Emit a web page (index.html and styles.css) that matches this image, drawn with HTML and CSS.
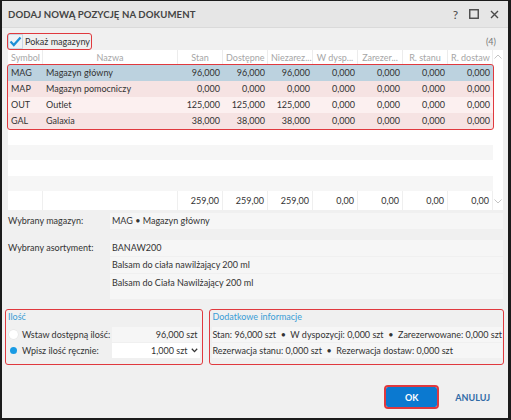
FILE: index.html
```html
<!DOCTYPE html>
<html lang="pl">
<head>
    <meta charset="UTF-8">
    <meta name="viewport" content="width=device-width, initial-scale=1.0">
    <title>Dodaj nową pozycję na dokument</title>
    <link rel="stylesheet" href="styles.css">
</head>
<body>
    <div class="dialog">
        <header class="titlebar">
            <h1>DODAJ NOWĄ POZYCJĘ NA DOKUMENT</h1>
            <div class="win-btns">
                <span class="help">?</span>
                <svg width="10" height="10" viewBox="0 0 10 10"><rect x="0.75" y="0.75" width="8.5" height="8.5" fill="none" stroke="#4a4a4a" stroke-width="1.4"/></svg>
                <svg width="9" height="9" viewBox="0 0 9 9"><path d="M1 1L8 8M8 1L1 8" stroke="#4a4a4a" stroke-width="1.4"/></svg>
            </div>
        </header>

        <main class="content">
            <div class="toolbar">
                <label class="check marked">
                    <span class="box">
                        <svg width="13" height="11" viewBox="0 0 13 11"><path d="M1.5 5.5L4.8 9L11.5 1.5" fill="none" stroke="#1c8fd6" stroke-width="2.2"/></svg>
                    </span>
                    Pokaż magazyny
                </label>
                <span class="count">(4)</span>
            </div>

            <div class="grid">
                <div class="grid-main">
                    <div class="row head">
                        <div>Symbol</div><div>Nazwa</div><div>Stan</div><div>Dostępne</div><div>Niezarez...</div><div>W dysp...</div><div>Zarezer...</div><div>R. stanu</div><div>R. dostaw</div>
                    </div>
                    <div class="rows marked">
                        <div class="row data sel">
                            <div>MAG</div><div>Magazyn główny</div><div class="num">96,000</div><div class="num">96,000</div><div class="num">96,000</div><div class="num">0,000</div><div class="num">0,000</div><div class="num">0,000</div><div class="num">0,000</div>
                        </div>
                        <div class="row data pink">
                            <div>MAP</div><div>Magazyn pomocniczy</div><div class="num">0,000</div><div class="num">0,000</div><div class="num">0,000</div><div class="num">0,000</div><div class="num">0,000</div><div class="num">0,000</div><div class="num">0,000</div>
                        </div>
                        <div class="row data light">
                            <div>OUT</div><div>Outlet</div><div class="num">125,000</div><div class="num">125,000</div><div class="num">125,000</div><div class="num">0,000</div><div class="num">0,000</div><div class="num">0,000</div><div class="num">0,000</div>
                        </div>
                        <div class="row data pink">
                            <div>GAL</div><div>Galaxia</div><div class="num">38,000</div><div class="num">38,000</div><div class="num">38,000</div><div class="num">0,000</div><div class="num">0,000</div><div class="num">0,000</div><div class="num">0,000</div>
                        </div>
                    </div>
                    <div class="empty"></div>
                    <div class="empty alt"></div>
                    <div class="empty"></div>
                    <div class="empty alt"></div>
                    <div class="row foot">
                        <div></div><div></div><div class="num">259,00</div><div class="num">259,00</div><div class="num">259,00</div><div class="num">0,00</div><div class="num">0,00</div><div class="num">0,00</div><div class="num">0,00</div>
                    </div>
                </div>
                <div class="scroll">
                    <svg width="8" height="5" viewBox="0 0 8 5"><path d="M0.5 4.5L4 1L7.5 4.5" fill="none" stroke="#c4c4c4"/></svg>
                    <svg width="8" height="5" viewBox="0 0 8 5"><path d="M0.5 0.5L4 4L7.5 0.5" fill="none" stroke="#c4c4c4"/></svg>
                </div>
            </div>

            <div class="details">
                <div class="field">
                    <span class="label">Wybrany magazyn:</span>
                    <div class="values">
                        <div class="value">MAG • Magazyn główny</div>
                    </div>
                </div>
                <div class="field">
                    <span class="label">Wybrany asortyment:</span>
                    <div class="values">
                        <div class="value">BANAW200</div>
                        <div class="value">Balsam do ciała nawilżający 200 ml</div>
                        <div class="value tall">Balsam do Ciała Nawilżający 200 ml</div>
                    </div>
                </div>
            </div>

            <div class="groups">
                <section class="group qty marked">
                    <h2>Ilość</h2>
                    <div class="qty-row">
                        <span class="radio"></span>
                        <span class="qty-label">Wstaw dostępną ilość:</span>
                        <span class="qty-value">96,000 szt</span>
                    </div>
                    <div class="qty-row">
                        <span class="radio on"></span>
                        <span class="qty-label">Wpisz ilość ręcznie:</span>
                        <span class="qty-value input">1,000 szt
                            <svg width="7" height="5" viewBox="0 0 7 5"><path d="M0.8 0.8L3.5 3.6L6.2 0.8" fill="none" stroke="#333" stroke-width="1.3"/></svg>
                        </span>
                    </div>
                </section>
                <section class="group info marked">
                    <h2>Dodatkowe informacje</h2>
                    <div class="info-row">Stan: 96,000 szt &nbsp;•&nbsp; W dyspozycji: 0,000 szt &nbsp;•&nbsp; Zarezerwowane: 0,000 szt</div>
                    <div class="info-row">Rezerwacja stanu: 0,000 szt &nbsp;•&nbsp; Rezerwacja dostaw: 0,000 szt</div>
                </section>
            </div>

            <div class="actions">
                <button class="btn-ok marked">OK</button>
                <button class="btn-cancel">ANULUJ</button>
            </div>
        </main>
    </div>
</body>
</html>
```

FILE: styles.css
```css
* {
    box-sizing: border-box;
}

body {
    margin: 0;
    font-family: Lato, "Noto Sans", sans-serif;
    font-size: 9px;
    color: #333;
    background-color: #fff;
}

.dialog {
    width: 511px;
    height: 420px;
    border-style: solid;
    border-color: #1b1b1b;
    border-width: 1px 3px 2px 2px;
    background-color: #f0f0f0;
    display: flex;
    flex-direction: column;
}

.titlebar {
    height: 27px;
    background-color: #e6e6e6;
    border-bottom: 1px solid #dadada;
    display: flex;
    align-items: center;
    justify-content: space-between;
    padding: 0 9px 0 6px;
}

h1 {
    margin: 0;
    font-size: 9.6px;
    font-weight: bold;
    color: #444;
    letter-spacing: 0.1px;
}

.win-btns {
    display: flex;
    align-items: center;
    gap: 11px;
    color: #4a4a4a;
}

.help {
    font-size: 12px;
}

.content {
    flex: 1;
    display: flex;
    flex-direction: column;
    padding: 5px 5px 0 6px;
}

.marked {
    outline: 1.5px solid #e0393e;
    border-radius: 2px;
}

/* toolbar */
.toolbar {
    height: 17px;
    display: flex;
    align-items: center;
    justify-content: space-between;
}

.check {
    height: 15px;
    display: flex;
    align-items: center;
    gap: 2px;
    padding-right: 1px;
}

.box {
    width: 15px;
    height: 15px;
    background-color: #eef2f6;
    border: 1px solid #c9d6e2;
    display: flex;
    align-items: center;
    justify-content: center;
}

.count {
    color: #777;
    padding-right: 7px;
}

/* grid */
.grid {
    height: 160px;
    display: flex;
    background-color: #fff;
}

.grid-main {
    width: 485px;
}

.row {
    display: grid;
    grid-template-columns: 35px 135px repeat(7, 45px);
}

.row > div {
    padding: 0 3px;
    white-space: nowrap;
    overflow: hidden;
}

.head {
    height: 15px;
    line-height: 15px;
    color: #a6a6a6;
}

.head > div {
    text-align: center;
    border-right: 1px solid #ececec;
}

.head > div:first-child {
    text-align: left;
}

.data {
    height: 16px;
    line-height: 16px;
}

.num {
    text-align: right;
}

.sel {
    background-color: #bcd2df;
}

.pink {
    background-color: #f6e3e3;
}

.light {
    background-color: #fcf0f0;
}

.empty {
    height: 15.5px;
}

.empty.alt {
    background-color: #f6f6f6;
}

.foot {
    height: 19px;
    line-height: 19px;
}

.foot > div {
    border-right: 1px solid #efefef;
}

.scroll {
    width: 10px;
    display: flex;
    flex-direction: column;
    align-items: center;
    justify-content: space-between;
    padding: 4px 0 6px;
}

/* details */
.details {
    padding-top: 3px;
    display: flex;
    flex-direction: column;
    gap: 11px;
}

.field {
    display: flex;
}

.label {
    width: 102px;
    line-height: 16px;
}

.values {
    flex: 1;
    display: flex;
    flex-direction: column;
    gap: 1px;
}

.value {
    height: 16px;
    line-height: 16px;
    padding-left: 2px;
    background-color: #f6f6f6;
}

.value.tall {
    height: 25px;
    padding-top: 1px;
}

/* bottom groups */
.groups {
    margin: 11px 0 0 -2px;
    display: flex;
    gap: 8px;
}

.group {
    height: 54px;
}

.group h2 {
    margin: 0 0 3px;
    height: 14px;
    line-height: 14px;
    font-size: 9px;
    font-weight: normal;
    color: #3a9dd6;
}

.qty {
    width: 229px;
    padding: 0 2px;
}

.qty-row {
    height: 15px;
    margin-bottom: 1px;
    display: flex;
    align-items: center;
}

.radio {
    width: 9px;
    height: 9px;
    margin-left: 1px;
    border-radius: 50%;
    background-color: #fff;
    box-shadow: 0 0 0 0.5px #e2e2e2;
    display: flex;
    align-items: center;
    justify-content: center;
}

.radio.on {
    background-color: transparent;
    box-shadow: none;
}

.radio.on::after {
    content: "";
    width: 7px;
    height: 7px;
    border-radius: 50%;
    background-color: #1a9be4;
}

.qty-label {
    width: 94px;
    padding-left: 4px;
}

.qty-value {
    flex: 1;
    height: 15px;
    line-height: 15px;
    text-align: right;
    padding-right: 3px;
    background-color: #f6f6f6;
}

.qty-value.input {
    background-color: #fff;
    display: flex;
    align-items: center;
    justify-content: flex-end;
    gap: 4px;
    padding-right: 2px;
}

.info {
    flex: 1;
    padding: 0 1px 0 2px;
}

.info-row {
    height: 15px;
    line-height: 15px;
    margin-bottom: 1px;
    background-color: #f6f6f6;
    white-space: nowrap;
}

/* actions */
.actions {
    margin-top: 23px;
    display: flex;
    justify-content: flex-end;
    align-items: center;
    gap: 18px;
    padding-right: 13px;
}

.btn-ok {
    width: 51px;
    height: 20px;
    border: none;
    background-color: #0b79d0;
    color: #fff;
    font: bold 9px Lato, "Noto Sans", sans-serif;
    outline-width: 2px;
    outline-offset: 0;
}

.btn-cancel {
    border: none;
    background: none;
    padding: 0;
    color: #2f6aa6;
    font: bold 9px Lato, "Noto Sans", sans-serif;
}
```
